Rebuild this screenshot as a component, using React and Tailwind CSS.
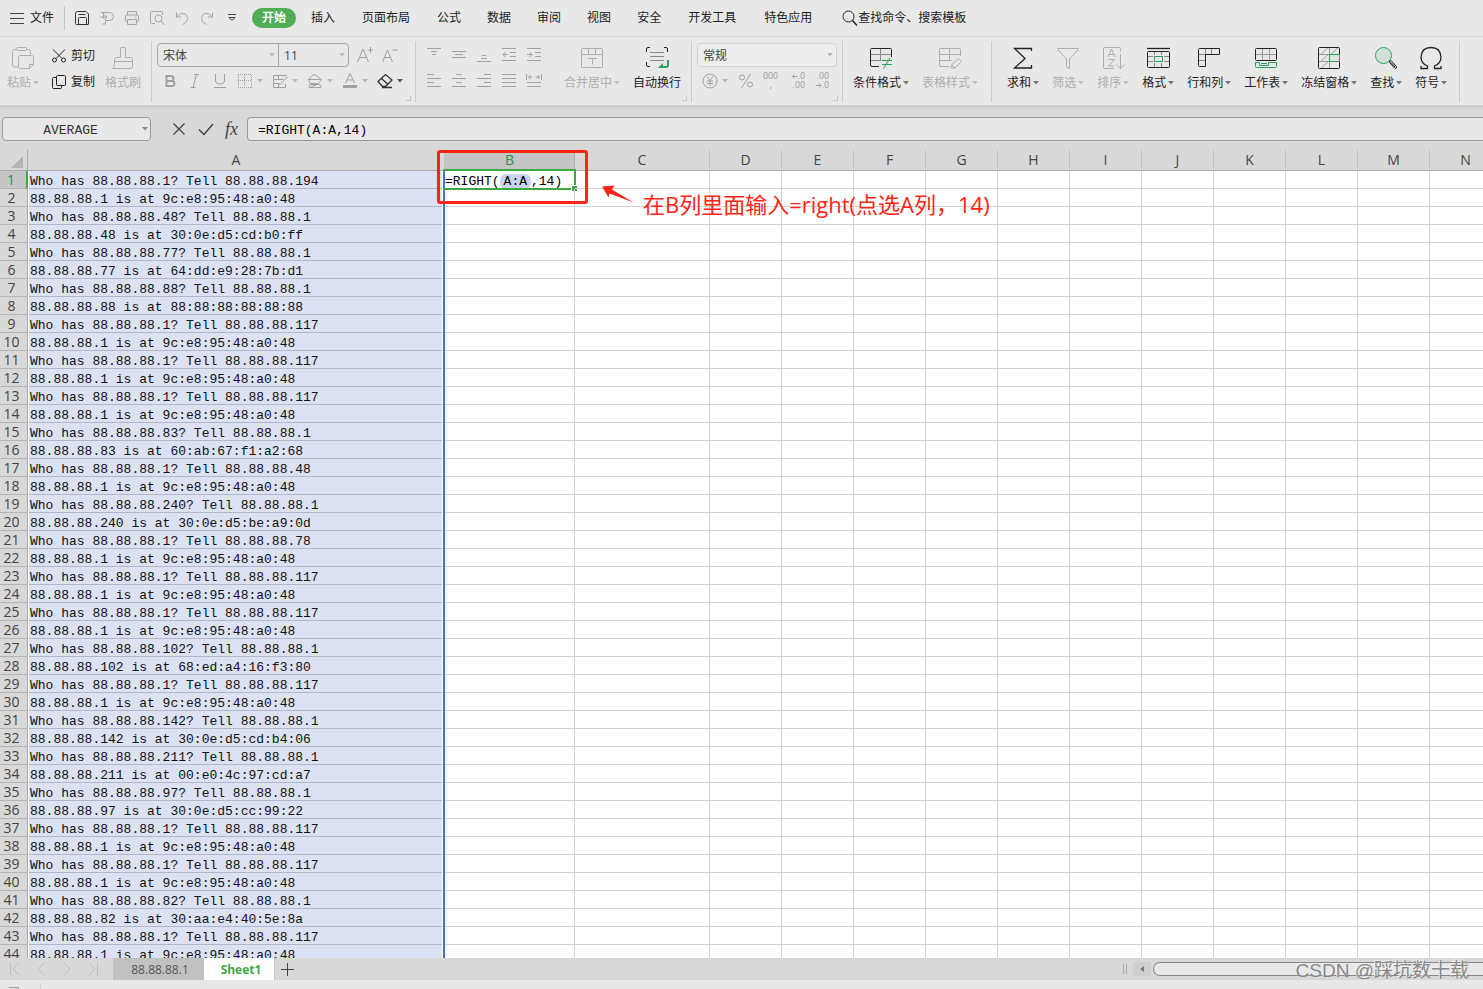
import { useState } from 'react';

const columns = ['A', 'B', 'C', 'D', 'E', 'F', 'G', 'H', 'I', 'J', 'K', 'L', 'M', 'N'];

const rows = [
  'Who has 88.88.88.1? Tell 88.88.88.194',
  '88.88.88.1 is at 9c:e8:95:48:a0:48',
  'Who has 88.88.88.48? Tell 88.88.88.1',
  '88.88.88.48 is at 30:0e:d5:cd:b0:ff',
  'Who has 88.88.88.77? Tell 88.88.88.1',
  '88.88.88.77 is at 64:dd:e9:28:7b:d1',
  'Who has 88.88.88.88? Tell 88.88.88.1',
  '88.88.88.88 is at 88:88:88:88:88:88',
  'Who has 88.88.88.1? Tell 88.88.88.117',
  '88.88.88.1 is at 9c:e8:95:48:a0:48',
  'Who has 88.88.88.1? Tell 88.88.88.117',
  '88.88.88.1 is at 9c:e8:95:48:a0:48',
  'Who has 88.88.88.1? Tell 88.88.88.117',
  '88.88.88.1 is at 9c:e8:95:48:a0:48',
  'Who has 88.88.88.83? Tell 88.88.88.1',
  '88.88.88.83 is at 60:ab:67:f1:a2:68',
  'Who has 88.88.88.1? Tell 88.88.88.48',
  '88.88.88.1 is at 9c:e8:95:48:a0:48',
  'Who has 88.88.88.240? Tell 88.88.88.1',
  '88.88.88.240 is at 30:0e:d5:be:a9:0d',
  'Who has 88.88.88.1? Tell 88.88.88.78',
  '88.88.88.1 is at 9c:e8:95:48:a0:48',
  'Who has 88.88.88.1? Tell 88.88.88.117',
  '88.88.88.1 is at 9c:e8:95:48:a0:48',
  'Who has 88.88.88.1? Tell 88.88.88.117',
  '88.88.88.1 is at 9c:e8:95:48:a0:48',
  'Who has 88.88.88.102? Tell 88.88.88.1',
  '88.88.88.102 is at 68:ed:a4:16:f3:80',
  'Who has 88.88.88.1? Tell 88.88.88.117',
  '88.88.88.1 is at 9c:e8:95:48:a0:48',
  'Who has 88.88.88.142? Tell 88.88.88.1',
  '88.88.88.142 is at 30:0e:d5:cd:b4:06',
  'Who has 88.88.88.211? Tell 88.88.88.1',
  '88.88.88.211 is at 00:e0:4c:97:cd:a7',
  'Who has 88.88.88.97? Tell 88.88.88.1',
  '88.88.88.97 is at 30:0e:d5:cc:99:22',
  'Who has 88.88.88.1? Tell 88.88.88.117',
  '88.88.88.1 is at 9c:e8:95:48:a0:48',
  'Who has 88.88.88.1? Tell 88.88.88.117',
  '88.88.88.1 is at 9c:e8:95:48:a0:48',
  'Who has 88.88.88.82? Tell 88.88.88.1',
  '88.88.88.82 is at 30:aa:e4:40:5e:8a',
  'Who has 88.88.88.1? Tell 88.88.88.117',
  '88.88.88.1 is at 9c:e8:95:48:a0:48',
];

const Icon = ({ size = 16, children, className = '' }) => (
  <svg
    width={size}
    height={size}
    viewBox={`0 0 ${size} ${size}`}
    fill="none"
    stroke="currentColor"
    className={`shrink-0 ${className}`}
    aria-hidden="true"
  >
    {children}
  </svg>
);

const Caret = ({ className = '' }) => (
  <svg width="6" height="4" viewBox="0 0 6 4" className={`shrink-0 ${className}`} aria-hidden="true">
    <path d="M0 0h6L3 3.5z" fill="currentColor" />
  </svg>
);

// Quick access icons
const quickTools = [
  {
    label: '保存',
    dark: true,
    icon: <path d="M1.5 13.5v-10q0-2 2-2H12L14.5 4v10q0 .5-.5.5H2.5q-1 0-1-1zM4.5 14.5v-6q0-1 1-1h6q1 0 1 1v6M4.5 4.5h7" />,
  },
  {
    label: '输出为PDF',
    icon: <path d="M2 2.5h8.5a3.5 3.5 0 0 1 0 8h-4M6.500 10.5V14h-3M4.5 2.5v6M1 7h7M5.5 4.5L8 7 5.5 9.5" />,
  },
  {
    label: '打印',
    icon: <path d="M3.5 5V1.5h9V5M3.5 11.5h-1q-1 0-1-1V6q0-1 1-1h11q1 0 1 1v4.5q0 1-1 1h-1M3.5 9.5h9v5h-9zM11 7.5h1.5" />,
  },
  {
    label: '打印预览',
    icon: <><path d="M6 13.5H2.5q-1 0-1-1v-10q0-1 1-1h10q1 0 1 1V5" /><circle cx="9.5" cy="8.5" r="3.5" /><path d="M12 11l3.500 4" /></>,
  },
  {
    label: '撤销',
    icon: <path d="M2.5 2.5V7H7M2.5 7Q6 2.5 10 3.5q3.5 1 3.5 5 0 4-5 6" />,
  },
  {
    label: '恢复',
    icon: <path d="M13.5 2.5V7H9M13.5 7Q10 2.5 6 3.5q-3.5 1-3.5 5 0 4 5 6" />,
  },
];

const menuTabs = ['公式', '数据', '审阅', '视图', '安全'];

const PasteIcon = () => (
  <Icon size={24}>
    <path d="M5 3.5H3.5q-2 0-2 2V19q0 2 2 2H7M16 3.5h1.5q2 0 2 2V9" />
    <rect x="5.5" y="1.5" width="10" height="3" rx="1" />
    <path d="M9.5 9.5h11q2 0 2 2v7l-4 4h-9q-2 0-2-2v-9q0-2 2-2zM18.5 22v-3.5h4" />
  </Icon>
);

const BrushIcon = () => (
  <Icon size={24}>
    <path d="M9.5 11.5v-9q0-1 1-1h3q1 0 1 1v9h5q2 0 2 2v7q0 2-2 2h-18q2-1 2-4v-5q0-2 2-2zM3.5 15.5h18" />
  </Icon>
);

const MergeIcon = () => (
  <Icon size={24}>
    <rect x="1.5" y="2.5" width="21" height="19" rx="1" />
    <path d="M1.5 8.5h21M8.5 2.5v6M15.5 2.5v6M8 12.5h9M12.5 12.5v6" />
  </Icon>
);

const WrapIcon = () => (
  <Icon size={24}>
    <path d="M5 1.5H3Q1.5 1.5 1.5 3v3M19 1.5h2q1.5 0 1.5 1.5v3M1.5 16v3q0 1.5 1.5 1.5h2" />
    <path d="M5 6.5h14M5 10.5h14M5 14.5h14" stroke="#888" />
    <path d="M23 14v5q0 2-2 2h-4" stroke="#2ba05a" strokeWidth="2" />
    <path d="M18 17v5h-5z" fill="#2ba05a" stroke="none" />
  </Icon>
);

const CondFormatIcon = () => (
  <Icon size={24}>
    <path d="M1.5 8.5h21M1.5 14.5h11M11.5 2.5v12" stroke="#888" />
    <path d="M10 20.5H3q-1.5 0-1.5-1.5V3.5q0-1 1-1h19q1 0 1 1V11" />
    <path d="M13 14.5h10M13 18.5h10M21 12l-6.500 10.5" stroke="#2ba05a" />
  </Icon>
);

const TableStyleIcon = () => (
  <Icon size={24}>
    <path d="M11 20.5H3q-1.5 0-1.5-1.5V3.5q0-1 1-1h19q1 0 1 1V10M1.5 8.5h21M1.5 14.5h12M11.5 2.5v12" />
    <path d="M20.5 12.5l3 3L17 22h-4v-2.500zM14 19l3 3" />
  </Icon>
);

const SumIcon = () => (
  <Icon size={24}>
    <path d="M20.5 5V2.5h-17l10.500 10L3.5 22h17v-3" strokeWidth="1.3" />
  </Icon>
);

const FilterIcon = () => (
  <Icon size={24}>
    <path d="M1.5 2.5h21v1l-9 9.5v9.5l-3-1.5v-8l-9-9.500z" />
  </Icon>
);

const SortIcon = () => (
  <Icon size={24}>
    <path d="M13 22.5H3.5q-1 0-1-1v-19q0-1 1-1h15q1 0 1 1v3M19.5 8v14M15.5 18.5l4 4 4-4" />
    <path d="M7 11l3.500-8L14 11M8 8.5h5M7.5 13.5h6l-6 6.500h6" />
  </Icon>
);

const FormatIcon = () => (
  <Icon size={24}>
    <path d="M1 2.5h23" strokeWidth="1.3" />
    <path d="M2 10.5h5M2 15.5h5M18 10.5h5M18 15.5h5M8.5 6v3M15.5 6v3M8.5 17v4M15.5 17v4" stroke="#888" />
    <rect x="1.5" y="5.5" width="22" height="16" rx="1" />
    <rect x="8.5" y="10.5" width="8" height="5" stroke="#2ba05a" />
  </Icon>
);

const RowColIcon = () => (
  <Icon size={24}>
    <path d="M2 8.5h7M14.5 2v6M8.5 2v6M2 14.5h6" stroke="#888" />
    <path d="M2.5 2.5h20v6h-14v12h-6q-1 0-1-1v-16q0-1 1-1z" />
  </Icon>
);

const SheetIcon = () => (
  <Icon size={24}>
    <path d="M1.5 8.5h21M8.5 2.5v12M15.5 2.5v12" stroke="#999" />
    <rect x="1.5" y="2.5" width="21" height="12" rx="1" />
    <path d="M1.5 16.5h4v3h9v-3h8v4q0 1-1 1h-19q-1 0-1-1zM7 17.5h6" stroke="#2ba05a" />
  </Icon>
);

const FreezeIcon = () => (
  <Icon size={24}>
    <path d="M12.5 2v20M2 8.5h20M2 15.5h20M4 8.5l7-7M14 8.5l7-7M4 15.5l7-7M4 22.5l7-7" stroke="#999" />
    <rect x="1.5" y="1.5" width="21" height="21" rx="1" />
    <rect x="12.5" y="8.5" width="10" height="7" fill="#dbe8e1" stroke="#2ba05a" />
  </Icon>
);

const FindIcon = () => (
  <Icon size={24}>
    <circle cx="9.5" cy="9.5" r="8" fill="#d2e0d9" stroke="#2ba05a" />
    <path d="M15.5 15l1.500-.5 5.500 6q.5 2-1.500 2l-5-5.500zM17 16.5l4 4.500" />
  </Icon>
);

const OmegaIcon = () => (
  <Icon size={24}>
    <path d="M2 20v2.5h6.5V20Q2 17.5 2 11 2.5 1.5 12 1.5T22 11q0 6.500-6.500 9v2.5H22V20" strokeWidth="1.3" />
  </Icon>
);

const tableTools = [
  { label: '条件格式', icon: <CondFormatIcon /> },
  { label: '表格样式', icon: <TableStyleIcon />, disabled: true },
];

const editTools = [
  { label: '求和', icon: <SumIcon /> },
  { label: '筛选', icon: <FilterIcon />, disabled: true },
  { label: '排序', icon: <SortIcon />, disabled: true },
  { label: '格式', icon: <FormatIcon /> },
  { label: '行和列', icon: <RowColIcon /> },
  { label: '工作表', icon: <SheetIcon /> },
  { label: '冻结窗格', icon: <FreezeIcon /> },
  { label: '查找', icon: <FindIcon /> },
  { label: '符号', icon: <OmegaIcon /> },
];

const alignTop = [
  { label: '顶端对齐', d: 'M1 1.5h14M5 4.5h6M6 7.5h4' },
  { label: '垂直居中', d: 'M1 4.5h14M4 7.5h8M1 10.5h14' },
  { label: '底端对齐', d: 'M6 8.5h4M5 11.5h6M1 14.5h14' },
  { label: '减少缩进', d: 'M1 1.5h14M9 5.5h6M9 9.5h6M1 13.5h14M2 7.5h5M4.5 5L2 7.5 4.5 10' },
  { label: '增加缩进', d: 'M1 1.5h14M9 5.5h6M9 9.5h6M1 13.5h14M1 7.5h5M3.5 5L6 7.5 3.5 10' },
];

const alignBottom = [
  { label: '左对齐', d: 'M1 1.5h7M1 5.5h14M1 9.5h7M1 13.5h14' },
  { label: '水平居中', d: 'M5 1.5h6M1 5.5h14M5 9.5h6M1 13.5h14' },
  { label: '右对齐', d: 'M8 1.5h7M1 5.5h14M8 9.5h7M1 13.5h14' },
  { label: '两端对齐', d: 'M1 1.5h14M1 5.5h14M1 9.5h14M1 13.5h14' },
  { label: '分散对齐', d: 'M.5 1v6M15.5 1v6M2.5 4h4M4.5 2l-2 2 2 2M9.5 4h4M11.5 2l2 2-2 2M1 9.5h14M1 13.5h14' },
];

const fontTools = [
  {
    label: '边框',
    icon: <path d="M1.5 2v13M7.5 2v13M14.5 2v13M1 1.5h14M1 7.5h14M1 14.5h14" strokeDasharray="1 1" />,
  },
  {
    label: '绘制边框',
    icon: <path d="M15 2.5H1.5v12h12V11M1.5 6.5h10M1.5 10.5h6M6.5 2.5v4M6.5 10.5v4M15.5 4L9 10.5 7.5 12" />,
  },
  {
    label: '填充颜色',
    icon: <><path d="M7 1L1.5 6.5l2 4h8l3-4L8 1.5M1.5 6.5h12M7 1v2" /><path d="M2 14.5q-1-3 2-3h8q3 1 2 3zM4 14l6-2.500" /></>,
  },
  {
    label: '字体颜色',
    icon: <><path d="M3.5 10L8 .5l4.500 9.500M5 7h6" /><path d="M1 13.5h14" strokeWidth="3" /></>,
  },
  {
    label: '清除',
    dark: true,
    icon: <path d="M1 8.5l7.500-7L15 7l-6.500 6.500h-3zM4.5 5.5l6 5.500M5 14.5h10" strokeWidth="1.3" />,
  },
];

const Group = ({ children, className = '', corner }) => (
  <div className={`relative flex h-[68px] shrink-0 items-start ${className}`}>
    {children}
    {corner && (
      <span className="absolute right-1 bottom-1 h-[5px] w-[5px] border-r border-b border-[#c4c4c4]" />
    )}
  </div>
);

const Divider = () => <div className="mt-1 h-[61px] w-px shrink-0 bg-[#cbcbcb]" />;

const BigTool = ({ label, icon, disabled, caret = true }) => (
  <button
    type="button"
    className={`flex shrink-0 flex-col items-center gap-[5px] pt-[9px] ${disabled ? 'text-[#adadad]' : 'text-[#222]'}`}
  >
    {icon}
    <span className="flex items-center gap-0.5 leading-4 whitespace-nowrap">
      {label}
      {caret && <Caret className={disabled ? 'text-[#c0c0c0]' : 'text-[#777]'} />}
    </span>
  </button>
);

const SmallTool = ({ label, children, className = 'w-[25px]' }) => (
  <button
    type="button"
    aria-label={label}
    className={`flex h-6 shrink-0 items-center justify-center text-[#a0a0a0] ${className}`}
  >
    {children}
  </button>
);

const TinyArrow = ({ d }) => (
  <svg width="6" height="5" viewBox="0 0 6 5" fill="none" stroke="currentColor" aria-hidden="true">
    <path d={d} />
  </svg>
);

const Combo = ({ label, value, className }) => (
  <div className={`relative flex h-6 items-center ${className}`}>
    <select aria-label={label} className="h-full w-full appearance-none bg-transparent pt-0.5 pl-[5px] text-[#444] outline-none">
      <option>{value}</option>
    </select>
    <Caret className="pointer-events-none absolute right-[3px] text-[#b8b8b8]" />
  </div>
);

const MenuBar = () => (
  <div className="flex h-[37px] items-center border-b border-[#d6d6d6] pb-px text-[#222]">
    <button type="button" className="flex h-6 shrink-0 items-center gap-1 pl-2">
      <Icon className="text-[#444]"><path d="M2 3.5h14M2 8.5h14M2 13.5h14" /></Icon>
      <span className="pl-0.5">文件</span>
    </button>
    <div className="ml-2.5 h-6 w-px shrink-0 bg-[#c4c4c4]" />
    <div className="flex shrink-0 pl-1">
      {quickTools.map((tool) => (
        <button
          key={tool.label}
          type="button"
          aria-label={tool.label}
          className={`flex h-6 w-[25px] items-center justify-center ${tool.dark ? 'text-[#333]' : 'text-[#a4a4a4]'}`}
        >
          <Icon>{tool.icon}</Icon>
        </button>
      ))}
      <button type="button" aria-label="自定义快速访问工具栏" className="flex h-6 w-[25px] items-center justify-center text-[#444]">
        <Icon size={8}><path d="M0 .5h8M1 3.5h6l-3 3z" /></Icon>
      </button>
    </div>
    <nav className="flex shrink-0 items-center pl-2 whitespace-nowrap">
      <button type="button" className="h-5 rounded-full bg-[#4fae54] px-2.5 font-bold text-white">开始</button>
      <button type="button" className="ml-0.5 px-[13px]">插入</button>
      <button type="button" className="px-3.5">页面布局</button>
      {menuTabs.map((tab) => (
        <button key={tab} type="button" className="px-[13px]">{tab}</button>
      ))}
      <button type="button" className="px-3.5">开发工具</button>
      <button type="button" className="px-3.5">特色应用</button>
    </nav>
    <button type="button" className="ml-4 flex shrink-0 items-center whitespace-nowrap">
      <Icon size={16}><circle cx="6.5" cy="6.5" r="5.5" /><path d="M10.5 10.5l4.500 5" strokeWidth="1.5" /></Icon>
      查找命令、搜索模板
    </button>
  </div>
);

const Ribbon = () => (
  <div className="relative flex h-[68px] items-start overflow-hidden">
    <Group className="pr-2.5 pl-[7px]">
      <BigTool label="粘贴" icon={<PasteIcon />} disabled />
      <div className="flex flex-col gap-0.5 px-2.5 pt-[7px] pl-3 text-[#222]">
        <button type="button" className="flex h-6 items-center gap-1">
          <Icon>
            <circle cx="3.5" cy="12" r="2" /><circle cx="12.5" cy="12" r="2" />
            <path d="M5 10.5l9-9M11 10.5l-9-9" />
          </Icon>
          剪切
        </button>
        <button type="button" className="flex h-6 items-center gap-1">
          <Icon>
            <rect x="5.5" y="1.5" width="9" height="10" rx="1" />
            <path d="M5.5 3.5h-3q-1 0-1 1v9q0 1 1 1h7q1 0 1-1v-2" />
          </Icon>
          复制
        </button>
      </div>
      <BigTool label="格式刷" icon={<BrushIcon />} disabled caret={false} />
    </Group>
    <Divider />

    {/* Font */}
    <Group className="flex-col gap-0.5 pt-1.5 pr-2 pl-[5px]" corner>
      <div className="flex items-center">
        <div className="flex rounded border border-[#a6a6a6]">
          <Combo label="字体" value="宋体" className="-my-px w-[120px]" />
          <Combo label="字号" value="11" className="-my-px w-[70px] border-l border-[#a6a6a6]" />
        </div>
        <SmallTool label="增大字号" className="ml-[3px] w-[25px]">
          <Icon><path d="M.5 15L6 2l5.500 13M2.5 10.5h7M13.5 0v6M10.5 3h6" /></Icon>
        </SmallTool>
        <SmallTool label="减小字号">
          <Icon><path d="M.5 15l5-12 5 12M2.5 10.5h6M10.5 3h5" /></Icon>
        </SmallTool>
      </div>
      <div className="flex">
        <SmallTool label="加粗"><Icon><path d="M4.5 3H9a2.5 2.5 0 0 1 0 5H4.5zM4.5 8H10a2.5 2.5 0 0 1 0 5H4.5z" strokeWidth="2" /></Icon></SmallTool>
        <SmallTool label="倾斜"><Icon><path d="M7 1.5h5M3.5 14.5h5M9.5 1.5l-3.500 13" /></Icon></SmallTool>
        <SmallTool label="下划线"><Icon><path d="M3.5 1v6q0 4 4.500 4t4.500-4V1M2 14.5h12" /></Icon></SmallTool>
        {fontTools.map((tool) => (
          <SmallTool key={tool.label} label={tool.label} className="w-[35px] gap-1">
            <Icon className={tool.dark ? 'text-[#333]' : ''}>{tool.icon}</Icon>
            <Caret className={tool.dark ? 'text-[#555]' : 'text-[#b8b8b8]'} />
          </SmallTool>
        ))}
      </div>
    </Group>
    <Divider />

    {/* Alignment */}
    <Group className="pr-2.5 pl-[5px]" corner>
      <div className="flex flex-col gap-0.5 pt-1.5">
        <div className="flex">
          {alignTop.map((item) => (
            <SmallTool key={item.label} label={item.label}><Icon><path d={item.d} /></Icon></SmallTool>
          ))}
        </div>
        <div className="flex">
          {alignBottom.map((item) => (
            <SmallTool key={item.label} label={item.label}><Icon><path d={item.d} /></Icon></SmallTool>
          ))}
        </div>
      </div>
      <div className="flex gap-[13px] pl-[18px]">
        <BigTool label="合并居中" icon={<MergeIcon />} disabled />
        <BigTool label="自动换行" icon={<WrapIcon />} caret={false} />
      </div>
    </Group>
    <Divider />

    {/* Number */}
    <Group className="flex-col gap-0.5 px-[5px] pt-1.5" corner>
      <Combo label="数字格式" value="常规" className="w-[140px] rounded border border-[#d2d2d2] bg-[#ededed]" />
      <div className="flex">
        <SmallTool label="货币" className="w-9 gap-1">
          <Icon><circle cx="8" cy="8" r="7" /><path d="M5 3.5l3 4 3-4M8 7.5V13M5 8h6M5 10.5h6" /></Icon>
          <Caret className="text-[#b8b8b8]" />
        </SmallTool>
        <SmallTool label="百分比">
          <Icon><circle cx="4" cy="4.5" r="2.5" /><circle cx="12" cy="11.5" r="2.5" /><path d="M12.5 1l-9 14" /></Icon>
        </SmallTool>
        <SmallTool label="千位分隔" className="w-[25px] flex-col font-['Roboto',sans-serif] text-[9px] leading-[9px]">
          <span>000</span>
          <span>,</span>
        </SmallTool>
        <SmallTool label="增加小数位" className="w-7 flex-col items-end pr-1.5 font-['Roboto',sans-serif] text-[9px] leading-[9px]">
          <span className="flex items-center"><TinyArrow d="M.5 2.5h5M2.5.5l-2 2 2 2" />.0</span>
          <span>.00</span>
        </SmallTool>
        <SmallTool label="减少小数位" className="w-6 flex-col items-end pr-1.5 font-['Roboto',sans-serif] text-[9px] leading-[9px]">
          <span>.00</span>
          <span className="flex items-center"><TinyArrow d="M0 2.5h5M3 .5l2 2-2 2" />.0</span>
        </SmallTool>
      </div>
    </Group>
    <Divider />

    <Group className="gap-[13px] pr-[13px] pl-2.5">
      {tableTools.map((tool) => <BigTool key={tool.label} {...tool} />)}
    </Group>
    <Divider />

    <Group className="gap-[13px] pr-3 pl-[15px]">
      {editTools.map((tool) => <BigTool key={tool.label} {...tool} />)}
    </Group>
    <Divider />
  </div>
);

const FormulaBar = ({ formula, onChange }) => (
  <div className="flex items-center bg-[#d8d8d8] bg-linear-to-b from-[#c9c9c9] via-[#d8d8d8] via-10% to-[#d8d8d8] pt-3 pb-[9px] pl-0.5">
    <div className="relative flex h-6 w-[149px] shrink-0 items-center rounded border border-[#999] bg-[#e8e8e8]">
      <input
        aria-label="名称框"
        defaultValue="AVERAGE"
        className="w-full bg-transparent pt-1 pr-3 text-center font-['Liberation_Mono',monospace] text-[13px] text-[#333] outline-none"
      />
      <Caret className="absolute right-0.5 text-[#888]" />
    </div>
    <div className="flex shrink-0 items-center pl-3.5 text-[#444]">
      <SmallTool label="取消" className="w-[27px]"><Icon className="text-[#444]"><path d="M2.5 2.5l11 11M13.5 2.5l-11 11" strokeWidth="1.3" /></Icon></SmallTool>
      <SmallTool label="输入" className="w-[27px]"><Icon className="text-[#444]"><path d="M1 8.5l5 5L15 3" strokeWidth="1.5" /></Icon></SmallTool>
      <button type="button" aria-label="插入函数" className="h-6 w-[25px] font-['Liberation_Serif',serif] text-lg leading-5 italic">fx</button>
    </div>
    <input
      aria-label="编辑栏"
      value={formula}
      onChange={(e) => onChange(e.target.value)}
      className="ml-[3px] h-6 min-w-0 flex-1 rounded-l border border-r-0 border-[#999] bg-[#e8e8e8] pt-0.5 pl-2.5 font-['Liberation_Mono',monospace] text-[13px] text-black outline-none"
    />
  </div>
);

const Sheet = () => (
  <div className="relative min-h-0 flex-1 overflow-hidden bg-white">
    <table className="w-full min-w-[1502px] table-fixed border-separate border-spacing-0">
      <colgroup>
        <col className="w-7" />
        <col className="w-[417px]" />
        <col className="w-[130px]" />
        <col className="w-[135px]" />
        {columns.slice(3, -1).map((name) => <col key={name} className="w-[72px]" />)}
        <col />
      </colgroup>
      <thead>
        <tr className="h-[21px] bg-[#d8d8d8] text-sm leading-5 text-[#444]">
          <th className="border-r border-b border-[#a9a9a9] p-0 font-normal">
            <svg width="12" height="12" viewBox="0 0 12 12" className="mt-1 mr-1 ml-auto" aria-hidden="true">
              <path d="M12 0v12H0z" fill="#b4b4b4" />
            </svg>
          </th>
          {columns.map((name) => (
            <th
              key={name}
              scope="col"
              className={`border-r border-b border-b-[#a9a9a9] p-0 font-normal ${
                name === 'B' ? 'border-r-[#b0b0b0] bg-[#c5c5c5] text-[#2f8f3a]' : 'border-r-[#c2c2c2]'
              }`}
            >
              {name}
            </th>
          ))}
        </tr>
      </thead>
      <tbody>
        {rows.map((text, i) => (
          <tr key={i} className="h-[18px]">
            <th
              scope="row"
              className={`border-b border-b-[#b4b4b4] p-0 pr-1 text-center text-sm leading-[17px] font-normal ${
                i === 0
                  ? 'border-r-2 border-r-[#3fa845] bg-[#c5c5c5] text-[#2f8f3a]'
                  : 'border-r border-r-[#a9a9a9] bg-[#d8d8d8] text-[#444]'
              }`}
            >
              {i + 1}
            </th>
            <td className="border-r-2 border-[#4472d0] bg-white p-0 pr-px pl-px">
              <div className="h-[18px] border-b border-[#b1b7ca] bg-[#dce2f4] pl-px font-['Liberation_Mono',monospace] text-[13px] leading-[21px] whitespace-nowrap text-[#111]">
                {text}
              </div>
            </td>
            {columns.slice(1).map((name) => (
              <td key={name} className="relative border-r border-b border-[#d2d2d2] p-0">
                {name === 'B' && i === 0 && (
                  <>
                    <div className="h-[17px] font-['Liberation_Mono',monospace] text-[13px] leading-[21px] whitespace-nowrap text-black">
                      =RIGHT(<span className="rounded-md bg-[#c8d3f0] px-1">A:A</span>,14)
                    </div>
                    <div className="absolute -top-0.5 -right-0.5 -bottom-0.5 -left-0.5 border-y-2 border-r-2 border-[#3fa845]">
                      <span className="absolute -right-[3px] -bottom-[3px] h-1.5 w-1.5 border-t border-l border-white bg-[#3fa845]" />
                    </div>
                  </>
                )}
              </td>
            ))}
          </tr>
        ))}
      </tbody>
    </table>

    {/* Annotation on top of the cells */}
    <div className="absolute top-0 left-[437px] h-[54px] w-[151px] rounded-[3px] border-[3px] border-[#ff2414]" />
    <svg width="34" height="20" viewBox="0 0 34 20" className="absolute top-[34px] left-[601px]" aria-hidden="true">
      <path d="M1 2.5l12.500-1L11 5.5l21.500 13-24-9-1 4z" fill="#ff2414" />
    </svg>
    <p className="absolute top-10 left-[643px] text-[22px] leading-7 whitespace-nowrap text-[#ff2414]">
      在B列里面输入=right(点选A列，14)
    </p>
  </div>
);

const SheetTabs = ({ active, onSelect }) => (
  <div className="flex h-[22px] shrink-0 items-stretch bg-[#d8d8d8] text-[#555]">
    <div className="flex w-[113px] items-center pl-0.5">
      {['M3.5 2v12M12 2L6 8l6 6', 'M11 2L5 8l6 6', 'M5 2l6 6-6 6', 'M12.5 2v12M4 2l6 6-6 6'].map((d) => (
        <SmallTool key={d} label="切换工作表" className="h-[22px] w-[26px]"><Icon className="text-[#bdbdbd]"><path d={d} /></Icon></SmallTool>
      ))}
    </div>
    {['88.88.88.1', 'Sheet1'].map((name) => (
      <button
        key={name}
        type="button"
        onClick={() => onSelect(name)}
        className={`shrink-0 border-r border-[#c4c4c4] pt-0.5 pl-1 ${
          active === name ? 'w-[71px] bg-white font-bold text-[#3fa845]' : 'w-[91px] bg-[#c1c1c1]'
        }`}
      >
        {name}
      </button>
    ))}
    <button type="button" aria-label="新建工作表" className="flex w-6 items-center justify-center text-[#444]">
      <Icon><path d="M8.5 2v13M2 8.5h13" /></Icon>
    </button>
    <div className="ml-auto flex w-[360px] items-center">
      <div className="h-2.5 w-1 border-x border-[#aaa]" />
      <button type="button" aria-label="向左滚动" className="ml-1.5 flex h-3.5 w-[18px] items-center justify-center bg-[#cfcfcf]">
        <svg width="4" height="6" viewBox="0 0 4 6" aria-hidden="true"><path d="M4 0v6L0 3z" fill="#777" /></svg>
      </button>
      <div className="ml-0.5 h-3.5 flex-1 rounded-l-full border border-r-0 border-[#888] bg-[#e8e8e8]" />
    </div>
  </div>
);

const App = () => {
  const [formula, setFormula] = useState('=RIGHT(A:A,14)');
  const [activeSheet, setActiveSheet] = useState('Sheet1');

  return (
    <div className="relative flex h-screen flex-col overflow-hidden bg-[#e8e8e8] font-['Open_Sans','Noto_Sans_CJK_SC',sans-serif] text-xs">
      <MenuBar />
      <Ribbon />
      <FormulaBar formula={formula} onChange={setFormula} />
      <Sheet />
      <SheetTabs active={activeSheet} onSelect={setActiveSheet} />
      <div className="flex h-[9px] shrink-0 items-end overflow-hidden pl-[9px]">
        <div className="h-[2px] w-2.5 border-t border-r border-[#999]" />
        <div className="ml-[21px] h-1.5 w-px bg-[#d0d0d0]" />
      </div>
      <p className="pointer-events-none absolute right-3.5 bottom-1 font-['Liberation_Sans','Noto_Sans_CJK_SC',sans-serif] text-[19px] leading-7 text-[#888] [text-shadow:-1px_-1px_0_#f2f2f2]">
        CSDN @踩坑数十载
      </p>
    </div>
  );
};

export default App;
